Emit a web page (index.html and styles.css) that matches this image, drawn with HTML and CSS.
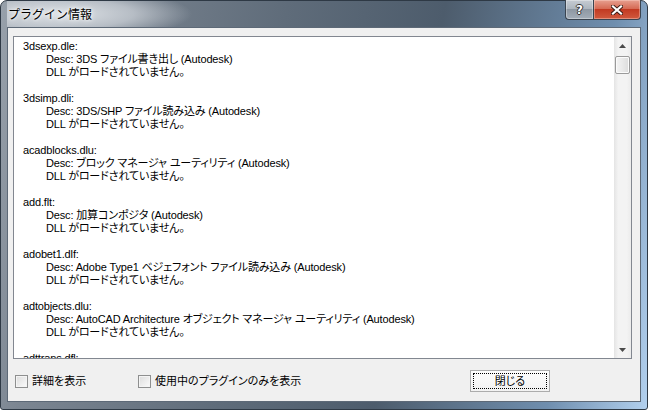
FILE: index.html
```html
<!DOCTYPE html>
<html lang="ja">
<head>
  <meta charset="UTF-8">
  <title>プラグイン情報</title>
  <link rel="stylesheet" href="styles.css">
</head>
<body>

  <div class="window">
    <div class="titlebar">
      <span class="title">プラグイン情報</span>
      <div class="caption-buttons">
        <span class="btn-help">?</span>
        <span class="btn-close">
          <svg width="12" height="10" viewBox="0 0 12 10">
            <path d="M2 1.5 L10 8.5 M10 1.5 L2 8.5" stroke="#3b1b14" stroke-width="4" stroke-linecap="square" fill="none"/>
            <path d="M2 1.5 L10 8.5 M10 1.5 L2 8.5" stroke="#fff" stroke-width="2.2" stroke-linecap="square" fill="none"/>
          </svg>
        </span>
      </div>
    </div>

    <div class="client">
      <!-- プラグイン一覧 -->
      <div class="listbox">
        <div class="list-content">
          <div class="entry">
            <div>3dsexp.dle:</div>
            <div class="sub">Desc: 3DS ファイル書き出し (Autodesk)</div>
            <div class="sub">DLL がロードされていません。</div>
          </div>
          <div class="entry">
            <div>3dsimp.dli:</div>
            <div class="sub">Desc: 3DS/SHP ファイル読み込み (Autodesk)</div>
            <div class="sub">DLL がロードされていません。</div>
          </div>
          <div class="entry">
            <div>acadblocks.dlu:</div>
            <div class="sub">Desc: ブロック マネージャ ユーティリティ (Autodesk)</div>
            <div class="sub">DLL がロードされていません。</div>
          </div>
          <div class="entry">
            <div>add.flt:</div>
            <div class="sub">Desc: 加算コンポジタ (Autodesk)</div>
            <div class="sub">DLL がロードされていません。</div>
          </div>
          <div class="entry">
            <div>adobet1.dlf:</div>
            <div class="sub">Desc: Adobe Type1 ベジェフォント ファイル読み込み (Autodesk)</div>
            <div class="sub">DLL がロードされていません。</div>
          </div>
          <div class="entry">
            <div>adtobjects.dlu:</div>
            <div class="sub">Desc: AutoCAD Architecture オブジェクト マネージャ ユーティリティ (Autodesk)</div>
            <div class="sub">DLL がロードされていません。</div>
          </div>
          <div class="entry">
            <div>adttrans.dfl:</div>
          </div>
        </div>
        <div class="scrollbar">
          <div class="sb-arrow">
            <svg width="7" height="4" viewBox="0 0 7 4"><path d="M0 4 L3.5 0 L7 4 Z" fill="#4a4a4a"/></svg>
          </div>
          <div class="sb-track">
            <div class="sb-thumb"></div>
          </div>
          <div class="sb-arrow">
            <svg width="7" height="4" viewBox="0 0 7 4"><path d="M0 0 L7 0 L3.5 4 Z" fill="#4a4a4a"/></svg>
          </div>
        </div>
      </div>

      <!-- 下部 -->
      <div class="footer">
        <label class="check first"><span class="box"></span><span>詳細を表示</span></label>
        <label class="check"><span class="box"></span><span>使用中のプラグインのみを表示</span></label>
        <div class="button"><span class="focus">閉じる</span></div>
      </div>
    </div>
  </div>

</body>
</html>
```

FILE: styles.css
```css
/* ベース */
body {
  margin: 0;
  font-family: "Liberation Sans", "Noto Sans CJK JP", sans-serif;
  font-size: 11px;
  color: #000;
}
/* ウィンドウ枠 */
.window {
  width: 648px;
  height: 410px;
  box-sizing: border-box;
  border: 1px solid #2e3945;
  border-radius: 7px 7px 3px 3px;
  padding: 0 6px 7px 6px;
  display: flex;
  flex-direction: column;
  background: linear-gradient(100deg, #98a1ab 0%, #7c8692 12%, #5f6c7a 40%, #4d5c6c 62%, #6f8eae 86%, #b2d0ee 100%);
}
.titlebar {
  height: 26px;
  display: flex;
  align-items: flex-start;
  background: radial-gradient(ellipse 130px 26px at 55px 13px, rgba(226,230,234,0.95) 0%, rgba(210,215,221,0.7) 55%, rgba(200,206,212,0) 100%);
}
.title {
  font-family: "Noto Sans CJK JP", sans-serif;
  font-size: 12px;
  line-height: 16px;
  margin: 5px 0 0 1px;
  text-shadow: 0 0 6px #fff, 0 0 3px #fff;
}
.caption-buttons {
  margin-left: auto;
  margin-top: -1px;
  display: flex;
}
.btn-help, .btn-close {
  height: 20px;
  box-sizing: border-box;
  border: 1px solid #3a4450;
  border-top: none;
  display: flex;
  align-items: center;
  justify-content: center;
}
.btn-help {
  width: 28px;
  border-right: none;
  border-radius: 0 0 0 4px;
  background: linear-gradient(#c6ccd3 0%, #aeb6bf 45%, #8e98a3 50%, #a3adb8 100%);
  box-shadow: inset 0 0 0 1px rgba(255,255,255,0.35);
  color: #fff;
  font-family: "DejaVu Sans", sans-serif;
  font-weight: bold;
  font-size: 12px;
  line-height: 14px;
  text-shadow: 1px 0 #333, -1px 0 #333, 0 1px #333, 0 -1px #333;
}
.btn-close {
  width: 48px;
  border-radius: 0 0 4px 0;
  background: linear-gradient(#e7a090 0%, #d66b55 45%, #c23a22 50%, #d05a3e 100%);
  box-shadow: inset 0 0 0 1px rgba(255,220,210,0.4);
}
/* クライアント領域 */
.client {
  flex: 1;
  border: 1px solid #5d6977;
  background: #f0f0f0;
  padding: 8px 8px 0 5px;
  display: flex;
  flex-direction: column;
}
.listbox {
  height: 323px;
  box-sizing: border-box;
  border: 1px solid #828790;
  background: #fff;
  display: flex;
}
.list-content {
  flex: 1;
  overflow: hidden;
  padding: 3px 0 0 9px;
  line-height: 13px;
  font-feature-settings: "palt";
  letter-spacing: -0.15px;
  white-space: nowrap;
}
.entry {
  margin-bottom: 13px;
}
.sub {
  padding-left: 23px;
}
/* スクロールバー */
.scrollbar {
  width: 17px;
  display: flex;
  flex-direction: column;
  background: linear-gradient(to right, #e4e4e4, #f3f3f3 25%, #f3f3f3 75%, #ebebeb);
}
.sb-arrow {
  height: 17px;
  display: flex;
  align-items: center;
  justify-content: center;
}
.sb-track {
  flex: 1;
  padding-top: 2px;
}
.sb-thumb {
  height: 16px;
  margin: 0 1px;
  border: 1px solid #9a9a9a;
  border-radius: 2px;
  background: linear-gradient(to right, #f4f4f4, #e9e9e9 50%, #dcdcdc);
  box-shadow: inset 0 0 0 1px #fbfbfb;
}
/* 下部 */
.footer {
  flex: 1;
  display: flex;
  align-items: center;
  padding: 2px 0 0 2px;
  line-height: 14px;
  font-feature-settings: "palt";
}
.check {
  display: flex;
  align-items: center;
  gap: 4px;
}
.check.first {
  width: 123px;
}
.box {
  width: 13px;
  height: 13px;
  box-sizing: border-box;
  border: 1px solid #8e8f8f;
  background: linear-gradient(135deg, #dcdcdc, #fbfbfb);
  box-shadow: inset 0 0 0 1px #f4f4f4;
}
.button {
  margin-left: auto;
  margin-right: 82px;
  width: 80px;
  height: 22px;
  box-sizing: border-box;
  border: 1px solid #acacac;
  background: linear-gradient(#fcfcfc, #f2f2f2);
  padding: 2px;
  display: flex;
}
.focus {
  flex: 1;
  border: 1px dotted #000;
  display: flex;
  align-items: center;
  justify-content: center;
}
```
